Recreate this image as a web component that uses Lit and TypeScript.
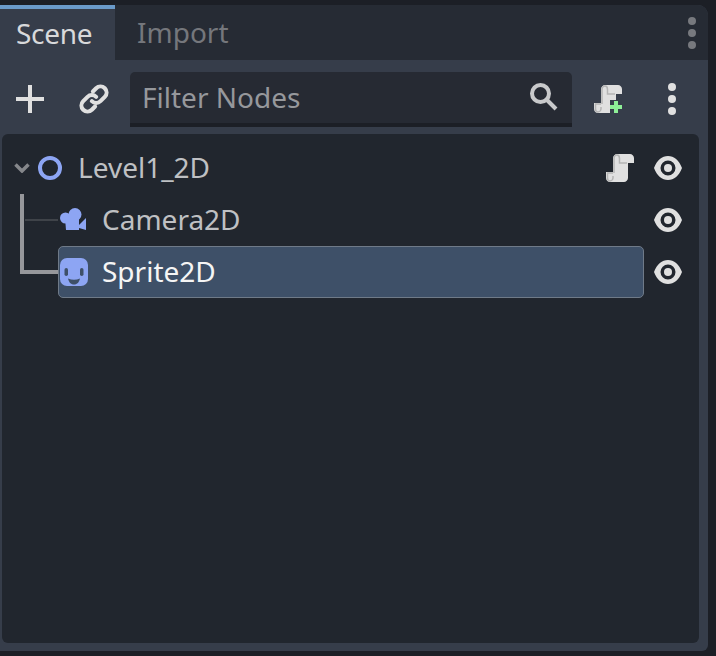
import { LitElement, html, css, svg } from "lit";
import { customElement } from "lit/decorators.js";

const eye = html`<svg class="ico" viewBox="0 0 28 28"><path fill="#e0e0e0" fill-rule="evenodd" d="M14 2C8 2 3 6 0 14c3 8 8 12 14 12s11-4 14-12C25 6 20 2 14 2zm0 4.500a7.500 7.500 0 1 1 0 15 7.500 7.500 0 0 1 0-15z"/><circle cx="14" cy="14" r="4" fill="#e0e0e0"/></svg>`;
const scrollShape = svg`
  <path fill="#e0e0e0" d="M11 0h13c2 0 4 2 4 4v5h-6v15c0 2-2 4-4 4H4c-2 0-4-1.500-4-4v-6h7V4c0-2 2-4 4-4z"/>
  <path fill="none" stroke="#b4b4b4" stroke-width="1.500" d="M8 19V4.500C8 2.500 9.500 1 11 1s2.500 1.500 2.500 3.500V9H21M7 19H1.500v5c0 1.500 1 3 2.500 3s3-1.500 3-3v-2"/>`;
const scriptIco = html`<svg class="ico" viewBox="0 0 28 28">${scrollShape}</svg>`;
const scriptAdd = html`<svg class="ico" viewBox="0 0 28 28">${scrollShape}
  <path fill="#363d4a" d="M16 15h12v13H16z"/>
  <path fill="#8eef97" d="M20 16h4v4h4v4h-4v4h-4v-4h-4v-4h4z"/></svg>`;
const dots = (c: string) => html`<svg class="ico" viewBox="0 0 28 28"><circle cx="14" cy="2" r="4" fill=${c}/><circle cx="14" cy="14" r="4" fill=${c}/><circle cx="14" cy="26" r="4" fill=${c}/></svg>`;

@customElement("app-root")
export class AppRoot extends LitElement {
  static styles = css`
    :host { display: block; width: 716px; height: 656px; background: #1c1f26; font-family: "Noto Sans", sans-serif; font-size: 28px; padding-top: 5px; box-sizing: border-box; overflow: hidden; }
    .ico { width: 28px; height: 28px; display: block; flex: none; overflow: visible; }
    .panel { width: 708px; height: 646px; background: #363d4a; border-radius: 0 10px 6px 0; overflow: hidden; display: flex; flex-direction: column; }
    .tabs { height: 55px; background: #262b34; display: flex; align-items: stretch; flex: none; }
    .tab { height: 55px; box-sizing: border-box; display: flex; align-items: center; color: #75777c; line-height: 1; }
    .tab.on { background: #363d4a; border-top: 4px solid #6a9ac9; color: #d8d9db; padding: 0 0 4px 16px; width: 115px; letter-spacing: -0.3px; }
    .tab.off { padding: 0 0 2px 22px; }
    .tabdots { margin-left: auto; margin-right: 2px; align-self: center; }
    .tools { height: 74px; flex: none; display: flex; align-items: center; padding: 4px 0 0 16px; box-sizing: border-box; }
    .gap36 { margin-left: 36px; }
    .filter { margin-left: 22px; width: 442px; height: 55px; box-sizing: border-box; background: #262a33; border-bottom: 4px solid #1c1f26; border-radius: 5px 5px 0 0; display: flex; align-items: center; padding: 0 14px 0 12px; color: #96989c; justify-content: space-between; }
    .add { margin-left: 22px; }
    .tree { margin: 0 9px 8px 2px; flex: 1; background: #21262e; border-radius: 6px; padding-top: 8px; position: relative; }
    .row { height: 52px; display: flex; align-items: center; }
    .cell { flex: none; width: 586px; height: 52px; box-sizing: border-box; margin-left: 56px; display: flex; align-items: center; padding-left: 2px; gap: 14px; color: #bfc0c3; }
    .cell.top { width: 668px; margin-left: 12px; padding-left: 0; }
    .cell.sel { background: #3e5068; border: 1px solid #6f7a88; border-radius: 5px; padding-left: 1px; color: #f5f5f5; }
    .cell .label { flex: 1; padding-bottom: 2px; }
    .chev { width: 16px; height: 10px; flex: none; margin-right: -8px; }
    .eye { margin-left: 10px; }
    .cell.top .eye { margin-left: 6px; }
    .lines { position: absolute; left: 0; top: 0; width: 70px; height: 160px; pointer-events: none; }
  `;
  render() {
    return html`<div class="panel">
      <div class="tabs">
        <div class="tab on">Scene</div>
        <div class="tab off">Import</div>
        <div class="tabdots">${dots("#77797e")}</div>
      </div>
      <div class="tools">
        <svg class="ico" viewBox="0 0 28 28"><path fill="#e0e0e0" d="M12 0h4v12h12v4H16v12h-4V16H0v-4h12z"/></svg>
        <svg class="ico gap36" viewBox="1 1 26 26"><g fill="none" stroke="#e0e0e0" stroke-width="3.800" stroke-linecap="round"><path d="M13 7l3-3a5.600 5.600 0 0 1 8 8l-4 4a5.600 5.600 0 0 1-8 0"/><path d="M15 21l-3 3a5.600 5.600 0 0 1-8-8l4-4a5.600 5.600 0 0 1 8 0"/></g></svg>
        <div class="filter"><span>Filter Nodes</span><svg class="ico" viewBox="0 0 28 28"><circle cx="10.500" cy="10.500" r="8.500" fill="none" stroke="#c8c9cb" stroke-width="4"/><path d="M17 17l9 9" stroke="#c8c9cb" stroke-width="4" fill="none"/></svg></div>
        <div class="add">${scriptAdd}</div>
        <div class="gap36">${dots("#e0e0e0")}</div>
      </div>
      <div class="tree">
        <div class="row">
          <div class="cell top">
            <svg class="chev" viewBox="0 0 16 10"><path d="M1.500 1.500L8 8l6.500-6.500" fill="none" stroke="#85878b" stroke-width="3.500"/></svg>
            <svg class="ico" viewBox="0 0 28 28"><circle cx="14" cy="14" r="10" fill="none" stroke="#8da5f3" stroke-width="4"/></svg>
            <span class="label">Level1_2D</span>
            ${scriptIco}
            <div class="eye">${eye}</div>
          </div>
        </div>
        <div class="row">
          <div class="cell">
            <svg class="ico" viewBox="0 0 28 28"><g fill="#8da5f3"><circle cx="5.500" cy="12" r="5.500"/><circle cx="15" cy="8.500" r="6.500"/><path d="M5 12h14v12H6z"/><path d="M19 19l7-7v12l-7-2z"/></g></svg>
            <span class="label">Camera2D</span>
          </div>
          <div class="eye">${eye}</div>
        </div>
        <div class="row">
          <div class="cell sel">
            <svg class="ico" viewBox="0 0 28 28"><rect width="28" height="28" rx="7" fill="#8da5f3"/><rect x="4.500" y="10" width="3.500" height="8" rx="1.750" fill="#3e5068"/><rect x="20" y="10" width="3.500" height="8" rx="1.750" fill="#3e5068"/><path d="M8 20.500Q14 23 20 20.500C19 25 16.500 26.500 14 26.500S9 25 8 20.500z" fill="#3e5068"/></svg>
            <span class="label">Sprite2D</span>
          </div>
          <div class="eye">${eye}</div>
        </div>
        <svg class="lines" viewBox="0 0 70 160"><path d="M20 60v80M18 138h38" fill="none" stroke="#96979b" stroke-width="4"/><path d="M23 86h33" stroke="#3f4349" stroke-width="2" fill="none"/></svg>
      </div>
    </div>`;
  }
}
